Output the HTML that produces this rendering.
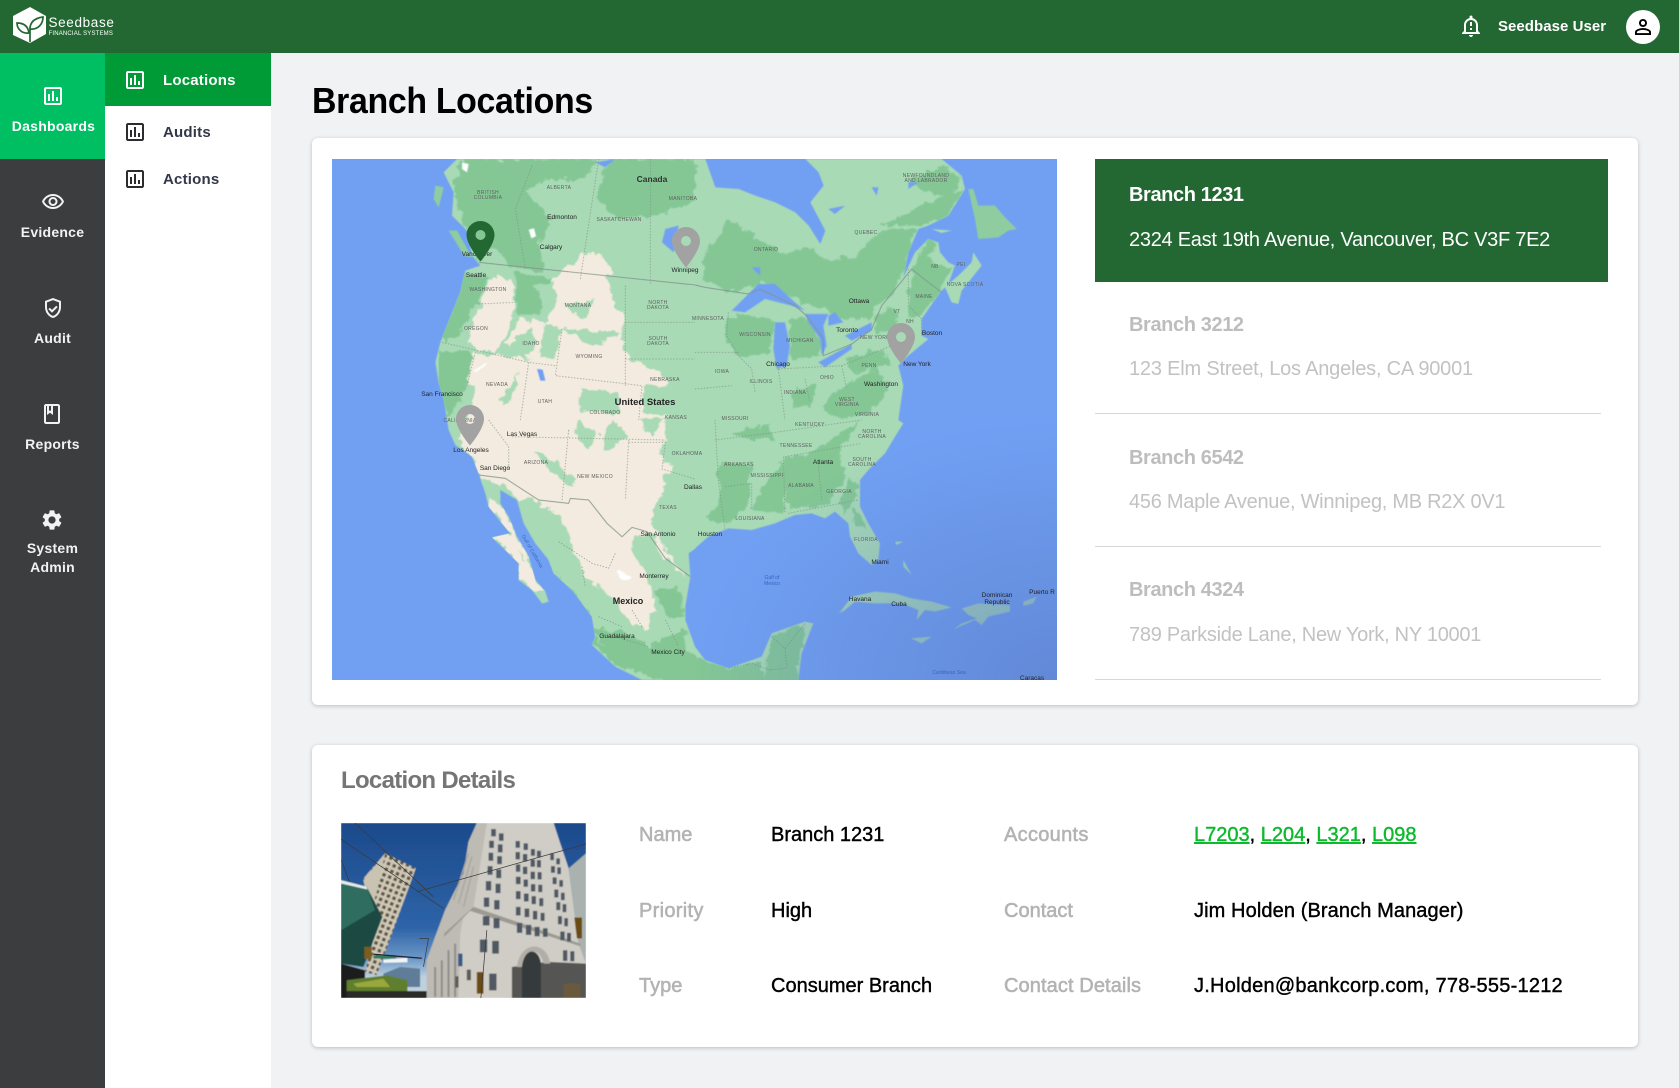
<!DOCTYPE html>
<html><head><meta charset="utf-8"><title>Branch Locations</title>
<style>
*{box-sizing:border-box}
html,body{margin:0;padding:0}
body{width:1679px;height:1088px;position:relative;overflow:hidden;background:#f1f2f4;font-family:"Liberation Sans",sans-serif}
.a{position:absolute;white-space:nowrap}
.bx{position:absolute}
.nav{position:absolute;left:0;width:105px;text-align:center;color:#f2f2f2;font-weight:700;font-size:14px;line-height:19px;letter-spacing:.25px}
.sub{position:absolute;left:163px;font-weight:700;font-size:15px;line-height:20px;letter-spacing:.2px;color:#33374a;white-space:nowrap}
svg.i{position:absolute;fill:currentColor}
.card{position:absolute;left:312px;width:1326px;background:#fff;border-radius:6px;box-shadow:0 1px 4px rgba(0,0,0,.22)}
.t{position:absolute;left:1129px;font-size:20px;line-height:24px;white-space:nowrap;letter-spacing:-.27px}
.h{font-weight:700;color:#bdbdbd;letter-spacing:-.39px}
.d{color:#c2c2c2}
.r{position:absolute;left:1095px;width:506px;height:1px;background:#d8d8d8}
.l,.v{position:absolute;font-size:20px;line-height:24px;white-space:nowrap;-webkit-text-stroke:.4px currentColor}
.l{color:#b3b3b3;-webkit-text-stroke:.55px currentColor}.v{color:#000}
.v u{color:#0cba2c}
#labels text{font-family:"Liberation Sans",sans-serif;text-anchor:middle;fill:#333}
#labels .s{font-size:5px;fill:#5f5f5f;letter-spacing:.3px}
#labels .c{font-size:6.5px;fill:#222;-webkit-text-stroke:.15px #222}
#labels .b{font-size:9.5px;font-weight:700;fill:#222}
#labels .w{font-size:5px;fill:#3467c0}
</style></head><body>

<div class="bx" style="left:0;top:0;width:1679px;height:53px;background:#236832"></div>
<svg class="bx" style="left:10px;top:4px" width="40" height="42" viewBox="10 4 40 42">
<path d="M30 7L46 16V34L30 43L13 35V16Z" fill="#fff"/>
<path d="M30 42V27M30 29C30 21 36 18 43 17C43 24 38 30 30 29ZM29 33C28 26 24 23 17 23C17 29 22 34 29 33Z" fill="none" stroke="#236832" stroke-width="1.7"/>
</svg>
<div class="a" style="left:48.500px;top:13px;font-size:13.500px;line-height:20px;color:#fff;letter-spacing:.65px">Seedbase</div>
<div class="a" style="left:48.500px;top:29.500px;font-size:6px;line-height:8px;color:#fff;letter-spacing:.18px">FINANCIAL SYSTEMS</div>
<svg class="i" style="left:1459px;top:14px;color:#fff" width="24" height="24" viewBox="0 0 24 24"><path d="M10.010 21.010c0 1.100.89 1.990 1.990 1.990s1.990-.89 1.990-1.990h-3.980zM12 6c2.760 0 5 2.240 5 5v7H7v-7c0-2.760 2.240-5 5-5zm0-4.500c-.83 0-1.500.67-1.500 1.500v1.170C7.360 4.850 5 7.650 5 11v6l-2 2v1h18v-1l-2-2v-6c0-3.350-2.360-6.150-5.500-6.830V3c0-.83-.67-1.500-1.500-1.500zM11 8h2v4h-2zm0 6h2v2h-2z"/></svg>
<div class="a" style="left:1498px;top:17px;font-weight:700;font-size:15px;line-height:20px;color:#fff;letter-spacing:.04px">Seedbase User</div>
<div class="bx" style="left:1626px;top:10px;width:34px;height:34px;border-radius:50%;background:#fff"></div>
<svg class="i" style="left:1631px;top:15px;color:#000" width="24" height="24" viewBox="0 0 24 24"><path d="M12 5.900c1.160 0 2.100.94 2.100 2.100s-.94 2.100-2.100 2.100S9.900 9.160 9.900 8s.94-2.100 2.100-2.100m0 9c2.970 0 6.100 1.460 6.100 2.100v1.100H5.900V17c0-.64 3.130-2.100 6.100-2.100M12 4C9.790 4 8 5.790 8 8s1.790 4 4 4 4-1.790 4-4-1.790-4-4-4zm0 9c-2.670 0-8 1.340-8 4v3h16v-3c0-2.660-5.330-4-8-4z"/></svg>

<div class="bx" style="left:0;top:53px;width:105px;height:1035px;background:#3c3d3f"></div>
<div class="bx" style="left:0;top:53px;width:105px;height:106px;background:#00bf63"></div>
<div class="bx" style="left:105px;top:53px;width:166px;height:1035px;background:#fff"></div>
<div class="bx" style="left:105px;top:53px;width:166px;height:53px;background:#009a36"></div>

<svg class="i" style="left:41px;top:84px;color:#fff" width="24" height="24" viewBox="0 0 24 24"><path d="M19 3H5c-1.100 0-2 .9-2 2v14c0 1.100.9 2 2 2h14c1.100 0 2-.9 2-2V5c0-1.100-.9-2-2-2zm0 16H5V5h14v14zM7 10h2v7H7zm4-3h2v10h-2zm4 6h2v4h-2z"/></svg>
<div class="nav" style="top:116.500px;color:#fff;left:1px">Dashboards</div>
<svg class="i" style="left:41px;top:190px;color:#f2f2f2" width="24" height="24" viewBox="0 0 24 24"><path d="M12 6c3.790 0 7.170 2.130 8.820 5.500C19.170 14.870 15.790 17 12 17s-7.170-2.130-8.820-5.500C4.830 8.130 8.210 6 12 6m0-2C7 4 2.730 7.110 1 11.500 2.730 15.890 7 19 12 19s9.270-3.110 11-7.500C21.270 7.110 17 4 12 4zm0 5c1.380 0 2.500 1.120 2.500 2.500S13.380 14 12 14s-2.500-1.120-2.500-2.500S10.620 9 12 9m0-2c-2.480 0-4.500 2.020-4.500 4.500S9.520 16 12 16s4.500-2.020 4.500-4.500S14.480 7 12 7z"/></svg>
<div class="nav" style="top:222.500px">Evidence</div>
<svg class="i" style="left:41px;top:296px;color:#f2f2f2" width="24" height="24" viewBox="0 0 24 24"><path d="M12 2L4 5v6.090c0 5.050 3.410 9.760 8 10.910 4.590-1.150 8-5.860 8-10.910V5l-8-3zm6 9.090c0 4-2.550 7.700-6 8.830-3.450-1.130-6-4.820-6-8.830v-4.700l6-2.250 6 2.250v4.700zm-9.180.64L7.400 13.150 11 16.760l5.660-5.660-1.410-1.410-4.240 4.240z"/></svg>
<div class="nav" style="top:328.500px">Audit</div>
<svg class="i" style="left:40px;top:402px;color:#f2f2f2" width="24" height="24" viewBox="0 0 24 24"><path d="M18 2H6c-1.100 0-2 .9-2 2v16c0 1.100.9 2 2 2h12c1.100 0 2-.9 2-2V4c0-1.100-.9-2-2-2zM9 4h2v5l-1-.75L9 9V4zm9 16H6V4h1v9l3-2.250L13 13V4h5v16z"/></svg>
<div class="nav" style="top:434.500px">Reports</div>
<svg class="i" style="left:40px;top:508px;color:#f2f2f2" width="24" height="24" viewBox="0 0 24 24"><path d="M19.140 12.940c.04-.3.06-.61.06-.94 0-.32-.02-.64-.07-.94l2.030-1.580c.18-.14.23-.41.12-.61l-1.920-3.320c-.12-.22-.37-.29-.59-.22l-2.390.96c-.5-.38-1.030-.7-1.620-.94l-.36-2.540c-.04-.24-.24-.41-.48-.41h-3.840c-.24 0-.43.17-.47.41l-.36 2.540c-.59.24-1.130.57-1.620.94l-2.390-.96c-.22-.08-.47 0-.59.22L2.740 8.870c-.12.21-.08.47.12.61l2.030 1.580c-.05.3-.09.63-.09.94s.02.64.07.94l-2.030 1.580c-.18.14-.23.41-.12.61l1.920 3.320c.12.22.37.29.59.22l2.390-.96c.5.38 1.030.7 1.620.94l.36 2.540c.05.24.24.41.48.41h3.840c.24 0 .44-.17.47-.41l.36-2.540c.59-.24 1.130-.56 1.620-.94l2.390.96c.22.08.47 0 .59-.22l1.920-3.320c.12-.22.07-.47-.12-.61l-2.010-1.580zM12 15.600c-1.980 0-3.600-1.620-3.600-3.600s1.620-3.600 3.600-3.600 3.600 1.620 3.600 3.600-1.620 3.600-3.600 3.600z"/></svg>
<div class="nav" style="top:538.500px">System<br>Admin</div>

<svg class="i" style="left:123px;top:68px;color:#fff" width="24" height="24" viewBox="0 0 24 24"><path d="M19 3H5c-1.100 0-2 .9-2 2v14c0 1.100.9 2 2 2h14c1.100 0 2-.9 2-2V5c0-1.100-.9-2-2-2zm0 16H5V5h14v14zM7 10h2v7H7zm4-3h2v10h-2zm4 6h2v4h-2z"/></svg>
<div class="sub" style="top:71px;color:#fff">Locations</div>
<svg class="i" style="left:123px;top:120px;color:#2c2c2e" width="24" height="24" viewBox="0 0 24 24"><path d="M19 3H5c-1.100 0-2 .9-2 2v14c0 1.100.9 2 2 2h14c1.100 0 2-.9 2-2V5c0-1.100-.9-2-2-2zm0 16H5V5h14v14zM7 10h2v7H7zm4-3h2v10h-2zm4 6h2v4h-2z"/></svg>
<div class="sub" style="top:122.500px">Audits</div>
<svg class="i" style="left:123px;top:167px;color:#2c2c2e" width="24" height="24" viewBox="0 0 24 24"><path d="M19 3H5c-1.100 0-2 .9-2 2v14c0 1.100.9 2 2 2h14c1.100 0 2-.9 2-2V5c0-1.100-.9-2-2-2zm0 16H5V5h14v14zM7 10h2v7H7zm4-3h2v10h-2zm4 6h2v4h-2z"/></svg>
<div class="sub" style="top:170px">Actions</div>

<div class="a" style="left:312px;top:79px;font-size:36px;line-height:44px;font-weight:700;color:#000;letter-spacing:-.35px;transform:scaleX(.941);transform-origin:0 0">Branch Locations</div>

<div class="card" style="top:138px;height:567px"></div>

<!-- map -->
<svg class="bx" style="left:332px;top:159px" width="725" height="521" viewBox="0 0 2175 1563" preserveAspectRatio="none">
<defs>
<radialGradient id="cg" cx="1" cy="1" r=".5"><stop offset="0" stop-color="#5a7cc8" stop-opacity=".65"/><stop offset="1" stop-color="#5a7cc8" stop-opacity="0"/></radialGradient>
<filter id="bl" x="-1%" y="-1%" width="102%" height="102%"><feGaussianBlur stdDeviation="1.500"/></filter>
<filter id="rough" x="0" y="0" width="100%" height="100%"><feTurbulence type="fractalNoise" baseFrequency=".035" numOctaves="3" seed="4" result="n"/><feDisplacementMap in="SourceGraphic" in2="n" scale="34" xChannelSelector="R" yChannelSelector="G"/><feGaussianBlur stdDeviation="1.500"/></filter>
<clipPath id="landclip"><path d="M375 0L335 40L365 100L360 170L405 215L420 290L445 320L400 335L385 400L365 450L345 500L325 550L310 610L320 670L335 720L345 783L350 813L370 858L420 893L440 943L460 1003L470 1043L510 1093L535 1123L480 1135L520 1173L560 1213L560 1263L600 1293L630 1333L650 1328L640 1298L610 1263L590 1193L555 1133L530 1073L505 1033L505 993L530 1008L555 1023L575 1093L610 1153L650 1203L665 1243L720 1293L780 1373L790 1433L780 1458L850 1523L930 1563L1399 1563L1409 1483L1444 1393L1419 1388L1319 1423L1289 1493L1189 1528L1119 1503L1089 1463L1060 1383L1060 1343L1075 1253L1070 1183L1089 1168L1129 1133L1189 1108L1259 1113L1329 1093L1389 1068L1439 1063L1479 1078L1509 1058L1549 1093L1554 1133L1579 1183L1619 1218L1639 1203L1644 1153L1609 1093L1584 1043L1584 963L1609 933L1659 883L1689 833L1714 793L1699 783L1714 680L1699 620L1729 590L1789 540L1769 530L1769 480L1824 400L1839 385L1859 430L1879 435L1889 395L1949 320L1924 280L1919 310L1879 350L1849 375L1869 320L1849 310L1824 280L1819 250L1789 240L1749 280L1714 355L1729 280L1759 210L1789 200L1849 170L1899 90L1889 50L1829 0L1420 0L1460 40L1475 80L1435 130L1480 215L1465 255L1430 200L1390 160L1330 130L1270 110L1220 90L1150 85L1120 0Z"/></clipPath>
</defs>
<rect width="2175" height="1563" fill="#71a0f3"/>
<g filter="url(#bl)">
<path fill="#a8dab6" d="M375 0L335 40L365 100L360 170L405 215L420 290L445 320L400 335L385 400L365 450L345 500L325 550L310 610L320 670L335 720L345 783L350 813L370 858L420 893L440 943L460 1003L470 1043L510 1093L535 1123L480 1135L520 1173L560 1213L560 1263L600 1293L630 1333L650 1328L640 1298L610 1263L590 1193L555 1133L530 1073L505 1033L505 993L530 1008L555 1023L575 1093L610 1153L650 1203L665 1243L720 1293L780 1373L790 1433L780 1458L850 1523L930 1563L1399 1563L1409 1483L1444 1393L1419 1388L1319 1423L1289 1493L1189 1528L1119 1503L1089 1463L1060 1383L1060 1343L1075 1253L1070 1183L1089 1168L1129 1133L1189 1108L1259 1113L1329 1093L1389 1068L1439 1063L1479 1078L1509 1058L1549 1093L1554 1133L1579 1183L1619 1218L1639 1203L1644 1153L1609 1093L1584 1043L1584 963L1609 933L1659 883L1689 833L1714 793L1699 783L1714 680L1699 620L1729 590L1789 540L1769 530L1769 480L1824 400L1839 385L1859 430L1879 435L1889 395L1949 320L1924 280L1919 310L1879 350L1849 375L1869 320L1849 310L1824 280L1819 250L1789 240L1749 280L1714 355L1729 280L1759 210L1789 200L1849 170L1899 90L1889 50L1829 0L1420 0L1460 40L1475 80L1435 130L1480 215L1465 255L1430 200L1390 160L1330 130L1270 110L1220 90L1150 85L1120 0Z"/>
<path fill="#8fcda0" d="M1909 90L1924 90L1939 140L1989 140L2019 175L2054 210L2029 215L1999 235L1939 240L1929 180ZM350 215L375 215L420 295L395 290L375 255ZM310 80L335 85L320 145L305 120Z"/>
<path fill="#a8dab6" d="M1799 210L1859 215L1829 222ZM1521 1363L1559 1313L1629 1298L1689 1303L1739 1318L1799 1328L1859 1345L1809 1358L1779 1353L1754 1383L1759 1353L1709 1333L1629 1333L1569 1328L1539 1353ZM1889 1348L1939 1333L2034 1338L2034 1358L1969 1373L1949 1398L1929 1383L1864 1411L1889 1393L1934 1378L1909 1368ZM1737 1438L1799 1433L1769 1453ZM2074 1328L2114 1313L2104 1333L2074 1341ZM1714 1203L1739 1248L1714 1223ZM1689 1148L1714 1148L1694 1158Z"/>
</g>
<g clip-path="url(#landclip)"><g filter="url(#rough)">
<g fill="#84c795">
<path d="M380 0L790 0L760 60L640 60L580 100L660 180L620 260L640 340L550 330L490 270L440 300L400 210L365 100Z"/>
<path d="M830 0L1089 0L1089 130L950 175L850 175L790 120Z"/>
<path d="M550 340L660 360L620 470L560 470Z"/>
<path d="M390 340L470 360L440 420L410 480L400 510L340 550L330 530L370 430Z"/>
<path d="M320 580L400 580L430 600L410 680L345 783L320 680Z"/>
</g>
<g fill="#f3ebdf">
<path d="M480 350L540 360L550 430L530 500L500 580L440 570L410 550L420 490L450 420Z"/>
<path d="M660 370L750 280L800 290L830 350L840 430L880 480L870 570L900 600L1000 650L1000 680L930 680L930 800L700 800L620 650L600 600L520 560L560 480L640 490L680 420Z"/>
<path d="M425 580L600 600L700 680L720 800L400 800L430 680L405 680Z"/>
<path d="M745 290L800 280L850 345L780 350Z"/>
</g>
<g fill="#a8dab6">
<path d="M560 640L520 700L500 740L550 700Z"/><path d="M640 490L690 510L660 600L620 590Z"/>
<path d="M750 690L860 700L870 800L770 800L740 730Z"/><path d="M690 510L870 520L780 560Z"/>
<path d="M690 440L790 420L760 480Z"/><path d="M600 380L670 370L640 440Z"/>
<path d="M530 560L600 500L610 580L550 600Z"/>
</g>
<g transform="translate(1089 0)">
<g fill="#84c795">
<path d="M20 310L100 180L180 230L260 285L330 270L400 300L490 290L560 210L660 210L640 300L600 400L540 440L520 480L440 480L390 450L300 420L200 370L100 400L30 360Z"/>
<path d="M660 320L700 240L735 250L690 300L770 330L740 390L680 470L650 480L640 400Z"/>
<path d="M560 200L620 170L700 130L790 90L810 90L760 170L680 200Z"/>
<path d="M640 60L750 20L800 60L760 110L680 100Z"/>
<path d="M540 470L600 450L600 510L540 530Z"/>
<path d="M100 470L220 470L240 500L220 590L130 590L100 540Z"/>
<path d="M280 480L340 480L380 540L370 590L290 600Z"/>
<path d="M420 700L550 620L580 700L520 760L440 783L380 740Z"/>
<path d="M450 600L560 570L580 620L480 640Z"/>
<path d="M300 690L360 680L350 740L290 750Z"/>
</g>
</g>
<g transform="translate(0 783)">
<g fill="#f3ebdf">
<path d="M470 -20L1000 -20L1000 130L1020 140L980 240L960 300L1000 390L1060 470L1000 530L950 580L960 630L880 600L840 540L760 470L700 420L690 290L630 260L620 240L555 240L520 190L470 190L440 160L425 115L375 60Z"/>
<path d="M510 310L535 340L480 352L520 390L560 430L560 480L600 510L640 515L610 480L590 410L555 350L530 290L505 250L470 230L470 260Z"/>
</g>
<g fill="#a8dab6">
<path d="M620 260L690 300L760 470L850 540L900 620L950 640L970 600L1010 640L1060 610L1060 800L850 740L780 650L760 560L660 450L650 410L630 370Z"/>
<path d="M900 350L960 340L1000 420L1060 470L1020 520L1060 600L970 600L960 510L940 460L900 400Z"/>
<path d="M1000 160L1089 130L1089 400L1000 330L950 300L1000 200Z"/>
<path d="M980 100L1040 0L1089 0L1089 130L1020 140Z"/>
<path d="M600 90L640 100L700 150L730 190L700 190L640 140Z"/><path d="M810 50L840 0L890 50L820 90Z"/>
<path d="M730 0L800 40L770 90L730 40Z"/><path d="M440 170L480 190L500 240L470 230Z"/>
<path d="M550 390L590 430L570 420Z"/><path d="M620 510L650 545L630 555Z"/>
<path d="M920 0L1000 -10L960 50Z"/>
</g>
<g fill="#84c795">
<path d="M660 440L760 560L790 650L860 740L780 680L720 520Z"/>
<path d="M780 620L880 640L950 680L1060 620L1060 800L850 740Z"/>
<path d="M970 510L1040 500L1060 590L1010 600Z"/>
</g>
<path fill="#fff" d="M865 455L878 450L900 480L888 490L860 465Z"/>
</g>
<g transform="translate(1089 783)">
<g fill="#84c795">
<path d="M270 110L350 100L420 50L500 0L430 100L450 170L400 250L280 270L265 200Z"/>
<path d="M170 270L220 170L265 120L270 200L260 280Z"/>
<path d="M70 130L170 130L160 250L100 310L40 300L70 220Z"/>
<path d="M110 40L220 10L240 60L160 60Z"/>
<path d="M470 170L490 200L450 280L430 250Z"/>
<path d="M470 260L500 290L510 330L470 300Z"/>
<path d="M230 650L330 610L320 680L300 800L200 800L220 710Z"/>
<path d="M-30 690L100 750L200 720L210 800L-30 800Z"/>
</g>
</g>
</g></g>
<g fill="#71a0f3" filter="url(#bl)">
<g transform="translate(1089 0)">
<path d="M110 455L190 375L240 375L300 430L330 455L290 440L210 420L150 460Z"/>
<path d="M240 490L270 490L285 560L275 620L245 630L235 570Z"/>
<path d="M330 465L400 465L385 500L395 560L380 590L375 540L340 490Z"/>
<path d="M400 470L420 460L445 490L400 500Z"/>
<path d="M370 610L470 555L470 570L390 625Z"/>
<path d="M450 530L530 490L530 515L470 545Z"/>
<path d="M170 325L195 325L195 350Z"/><path d="M400 150L450 140L420 165Z"/><path d="M530 85L550 85L545 110Z"/><path d="M640 70L670 70L640 90Z"/>
</g>
<path d="M1000 210L1040 200L1025 280L990 250Z"/>
<path d="M615 630L632 632L640 665L625 665Z"/>
<path d="M790 10L850 0L820 25Z"/>
</g>
<g fill="#fff" filter="url(#bl)"><path d="M390 10L410 15L405 40L390 30Z"/><path d="M590 212L606 208L612 232L598 238Z"/><path d="M425 635L465 610L460 620L430 640Z"/></g>
<g fill="none" stroke="#84948a" stroke-width="2.500">
<path d="M440 310L1089 378L1119 385L1249 405L1284 390L1389 440L1424 470L1474 540L1474 590L1559 555L1619 510L1649 440L1739 330L1789 370L1829 400"/>
<path d="M440 948L520 958L620 1023L710 1033L715 1018L770 1023L825 1093L870 1133L900 1105L945 1118L1000 1198L1075 1253"/>
</g>
<g fill="none" stroke="#7d8d83" stroke-width="2" stroke-dasharray="4 5">
<path d="M600 20L550 150L580 330M800 0L745 360M955 0L955 378"/>
<path d="M440 435L550 430M330 550L590 610L670 620M880 380L880 680M880 490L1089 490M880 600L1089 600M590 610L565 783M430 580L405 680M690 510L670 650L930 680L920 783"/>
<path d="M470 783L530 863L530 933M710 813L690 1023M890 843L880 1023M540 833L1000 843M890 850L1000 850L990 930L1089 960"/>
<g transform="translate(1089 0)"><path d="M100 460L95 530L130 590L170 630L180 700M0 580L130 580M250 630L440 620L590 560M250 630L270 783M330 660L345 730M440 620L455 690M0 690L110 680M640 330L640 440L680 480L680 530"/></g>
<g transform="translate(1089 783)"><path d="M60 0L70 180L90 330M60 60L220 40L500 0M90 200L170 190L170 270M265 110L270 280M270 110L500 70M280 280L490 240M370 130L380 240"/><path d="M230 650L270 685L330 610M100 745L170 730L220 750L270 745M270 685L275 745"/></g>
<g transform="translate(0 783)"><path d="M680 365L780 430L830 445L850 400M750 440L760 500M900 570L930 620M800 590L870 620M850 650L950 680M1000 600L1040 680"/></g>
</g>
<rect width="2175" height="1563" fill="url(#cg)"/>
</svg>
<svg id="labels" class="bx" style="left:332px;top:159px" width="725" height="521" viewBox="0 0 725 521">
<text x="320" y="23" style="font-size:8.500px;font-weight:700">Canada</text>
<text class="s" x="156" y="35">BRITISH</text><text class="s" x="156" y="40">COLUMBIA</text>
<text class="s" x="227" y="30">ALBERTA</text><text class="s" x="351" y="41">MANITOBA</text><text class="s" x="287" y="62">SASKATCHEWAN</text>
<text class="c" x="230" y="60">Edmonton</text><text class="c" x="219" y="90">Calgary</text>
<text class="s" x="434" y="92">ONTARIO</text><text class="s" x="534" y="75">QUEBEC</text>
<text class="s" x="594" y="18">NEWFOUNDLAND</text><text class="s" x="594" y="23">AND LABRADOR</text>
<text class="c" x="145" y="97">Vancouver</text><text class="c" x="144" y="118">Seattle</text><text class="s" x="156" y="132">WASHINGTON</text>
<text class="c" x="353" y="113">Winnipeg</text>
<text class="s" x="326" y="145">NORTH</text><text class="s" x="326" y="150">DAKOTA</text>
<text class="s" x="246" y="148">MONTANA</text><text class="s" x="376" y="161">MINNESOTA</text>
<text class="c" x="527" y="144">Ottawa</text><text class="s" x="633" y="127">NOVA SCOTIA</text>
<text class="s" x="603" y="109">NB</text><text class="s" x="629" y="107">PEI</text><text class="s" x="592" y="139">MAINE</text>
<text class="s" x="565" y="154">VT</text><text class="s" x="578" y="164">NH</text>
<text class="c" x="515" y="173">Toronto</text><text class="s" x="543" y="180">NEW YORK</text><text class="c" x="600" y="176">Boston</text>
<text class="s" x="144" y="171">OREGON</text><text class="s" x="199" y="186">IDAHO</text><text class="s" x="257" y="199">WYOMING</text>
<text class="s" x="326" y="181">SOUTH</text><text class="s" x="326" y="186">DAKOTA</text>
<text class="s" x="423" y="177">WISCONSIN</text><text class="s" x="468" y="183">MICHIGAN</text>
<text class="c" x="446" y="207">Chicago</text><text class="s" x="390" y="214">IOWA</text><text class="s" x="429" y="224">ILLINOIS</text>
<text class="s" x="463" y="235">INDIANA</text><text class="s" x="495" y="220">OHIO</text><text class="s" x="537" y="208">PENN</text>
<text class="c" x="585" y="207">New York</text><text class="c" x="549" y="227">Washington</text>
<text class="s" x="515" y="242">WEST</text><text class="s" x="515" y="247">VIRGINIA</text><text class="s" x="535" y="257">VIRGINIA</text>
<text class="s" x="165" y="227">NEVADA</text><text class="s" x="333" y="222">NEBRASKA</text>
<text class="b" x="313" y="246">United States</text>
<text class="s" x="213" y="244">UTAH</text><text class="s" x="273" y="255">COLORADO</text><text class="s" x="344" y="260">KANSAS</text>
<text class="s" x="403" y="261">MISSOURI</text><text class="s" x="478" y="267">KENTUCKY</text>
<text class="s" x="540" y="274">NORTH</text><text class="s" x="540" y="279">CAROLINA</text>
<text class="c" x="110" y="237">San Francisco</text><text class="s" x="128" y="263">CALIFORNIA</text>
<text class="c" x="190" y="277">Las Vegas</text><text class="c" x="139" y="293">Los Angeles</text><text class="c" x="163" y="311">San Diego</text>
<text class="s" x="204" y="305">ARIZONA</text><text class="s" x="263" y="319">NEW MEXICO</text><text class="s" x="355" y="296">OKLAHOMA</text>
<text class="s" x="407" y="307">ARKANSAS</text><text class="s" x="464" y="288">TENNESSEE</text><text class="s" x="435" y="318">MISSISSIPPI</text>
<text class="s" x="469" y="328">ALABAMA</text><text class="s" x="507" y="334">GEORGIA</text>
<text class="s" x="530" y="302">SOUTH</text><text class="s" x="530" y="307">CAROLINA</text>
<text class="c" x="491" y="305">Atlanta</text><text class="c" x="361" y="330">Dallas</text><text class="s" x="336" y="350">TEXAS</text>
<text class="s" x="418" y="361">LOUISIANA</text><text class="s" x="534" y="382">FLORIDA</text>
<text class="c" x="326" y="377">San Antonio</text><text class="c" x="378" y="377">Houston</text><text class="c" x="548" y="405">Miami</text>
<text class="c" x="322" y="419">Monterrey</text><text class="b" x="296" y="445" style="font-size:9px">Mexico</text>
<text class="c" x="285" y="479">Guadalajara</text><text class="c" x="336" y="495">Mexico City</text>
<text class="w" x="440" y="420">Gulf of</text><text class="w" x="440" y="426">Mexico</text>
<text class="c" x="528" y="442">Havana</text><text class="c" x="567" y="447">Cuba</text>
<text class="c" x="665" y="438">Dominican</text><text class="c" x="665" y="445">Republic</text><text class="c" x="710" y="435">Puerto R</text>
<text class="w" x="617" y="515">Caribbean Sea</text><text class="c" x="700" y="521">Caracas</text>
<text class="w" transform="translate(199 393) rotate(60)">Gulf of California</text>
<g fill-rule="evenodd">
<path fill="#236832" transform="translate(134.500 62)" d="M14 0C6.300 0 0 6.300 0 14c0 10 14 26.500 14 26.500S28 24 28 14C28 6.300 21.700 0 14 0ZM14 9a5 5 0 1 1 0 10a5 5 0 1 1 0-10Z"/>
<path fill="#a2a2a2" transform="translate(340 68)" d="M14 0C6.300 0 0 6.300 0 14c0 10 14 26.500 14 26.500S28 24 28 14C28 6.300 21.700 0 14 0ZM14 9a5 5 0 1 1 0 10a5 5 0 1 1 0-10Z"/>
<path fill="#a2a2a2" transform="translate(555 164)" d="M14 0C6.300 0 0 6.300 0 14c0 10 14 26.500 14 26.500S28 24 28 14C28 6.300 21.700 0 14 0ZM14 9a5 5 0 1 1 0 10a5 5 0 1 1 0-10Z"/>
<path fill="#a2a2a2" transform="translate(124 246)" d="M14 0C6.300 0 0 6.300 0 14c0 10 14 26.500 14 26.500S28 24 28 14C28 6.300 21.700 0 14 0ZM14 9a5 5 0 1 1 0 10a5 5 0 1 1 0-10Z"/>
</g>
</svg>

<!-- branch list -->
<div class="bx" style="left:1095px;top:159px;width:513px;height:123px;background:#236832"></div>
<div class="t" style="top:183px;font-weight:700;color:#fff;letter-spacing:-.39px">Branch 1231</div>
<div class="t" style="top:228px;color:#fff">2324 East 19th Avenue, Vancouver, BC V3F 7E2</div>
<div class="t h" style="top:313px">Branch 3212</div>
<div class="t d" style="top:357px;letter-spacing:-.2px">123 Elm Street, Los Angeles, CA 90001</div>
<div class="r" style="top:413px"></div>
<div class="t h" style="top:446px">Branch 6542</div>
<div class="t d" style="top:490px">456 Maple Avenue, Winnipeg, MB R2X 0V1</div>
<div class="r" style="top:546px"></div>
<div class="t h" style="top:578px">Branch 4324</div>
<div class="t d" style="top:623px">789 Parkside Lane, New York, NY 10001</div>
<div class="r" style="top:679px"></div>

<!-- details -->
<div class="card" style="top:745px;height:302px"></div>
<div class="a" style="left:341px;top:767px;font-size:24px;line-height:28px;font-weight:700;color:#757575;letter-spacing:-.7px">Location Details</div>

<svg class="bx" style="left:341px;top:823px" width="245" height="175" viewBox="63 69 734 524" preserveAspectRatio="none">
<defs>
<linearGradient id="sky" x1="0" y1="0" x2="0" y2="1"><stop offset="0" stop-color="#1c4a8c"/><stop offset=".6" stop-color="#2e64a8"/><stop offset=".78" stop-color="#6f9ac8"/><stop offset=".88" stop-color="#bcd0de"/><stop offset="1" stop-color="#c4d3de"/></linearGradient>
<pattern id="grid" width="18" height="18" patternUnits="userSpaceOnUse" patternTransform="rotate(22)"><rect width="18" height="18" fill="#cfc8b6"/><rect x="5" y="5" width="10" height="10" fill="#5a5142"/></pattern>
<filter id="b2"><feGaussianBlur stdDeviation="1.600"/></filter>
</defs>
<g filter="url(#b2)">
<rect x="63" y="69" width="734" height="524" fill="url(#sky)"/>
<path d="M190 520L240 500L300 505V560H190Z" fill="#5f7d98"/>
<path d="M190 478L262 472L262 486L190 488Z" fill="#f2f4f5"/>
<path d="M130 235L195 160L287 205L170 525L135 515L175 360Z" fill="url(#grid)"/>
<path d="M130 240L195 160L172 270L150 340Z" fill="#c9c3b3"/>
<path d="M63 240L140 260L187 350L130 500L63 490Z" fill="#1d4a42"/>
<path d="M63 240L140 260L165 330L63 390Z" fill="#2f6d60"/>
<path d="M63 240L140 260L142 268L63 250Z" fill="#e6ecea"/>
<path d="M63 490L135 510L135 593H63Z" fill="#1e1e1e"/>
<path d="M80 540L200 525L262 540L262 572H80Z" fill="#5f7f2d"/>
<path d="M100 550L190 535L210 560H110Z" fill="#9aa83a"/>
<path d="M80 572H330V593H80Z" fill="#2a2a26"/>
<path d="M745 205L797 160V490L775 430Z" fill="#a9b2af"/>
<path d="M470 69H700L720 130L745 205L775 430L797 490V593H320V480L345 410L375 330L430 220L445 125Z" fill="#cfcdc5"/>
<path d="M470 69L500 69L460 320L430 350L420 400L415 593H320V480L345 410L375 330L430 220L445 125Z" fill="#bdbbb3"/>
<path d="M372 400L460 320L780 430L780 438L450 332L372 410Z" fill="#9c9a92"/>
<path d="M345 590V500M365 590V480M385 590V450M405 590V430" stroke="#8f8d87" stroke-width="6" fill="none"/>
<path d="M400 300L445 160M415 310L455 170M430 320L460 200" stroke="#a8a69f" stroke-width="4" fill="none"/>
<path fill="#4f5963" d="M513 87h14v22h-14zM507 122h14v22h-14zM505 158h14v24h-14zM502 198h15v26h-15zM497 243h16v28h-16zM491 292h16v28h-16zM536 100h14v22h-14zM533 133h14v24h-14zM531 168h14v24h-14zM528 208h15v26h-15zM526 251h15v28h-15zM522 300h16v28h-16zM586 123h13v20h-13zM586 156h13v22h-13zM587 193h13v22h-13zM587 230h14v22h-14zM587 273h14v24h-14zM587 320h14v26h-14zM610 130h13v20h-13zM608 162h13v22h-13zM608 200h13v22h-13zM610 238h13v22h-13zM611 280h14v24h-14zM613 325h14v26h-14zM632 147h12v20h-12zM631 178h13v22h-13zM631 215h13v22h-13zM632 252h13v22h-13zM634 288h13v24h-13zM638 332h13v26h-13zM650 152h12v20h-12zM650 180h12v22h-12zM652 216h12v22h-12zM654 254h12v22h-12zM657 294h12v24h-12zM661 338h12v24h-12zM690 160h11v20h-11zM692 198h12v20h-12zM697 232h12v20h-12zM702 268h12v24h-12zM708 306h12v24h-12zM713 348h12v24h-12zM708 175h11v18h-11zM711 202h11v20h-11zM717 240h11v20h-11zM722 278h11v22h-11zM727 312h11v24h-11zM732 354h11v24h-11zM590 368h16v30h-16zM617 374h16v30h-16zM643 380h15v28h-15zM668 384h14v26h-14zM720 394h13v26h-13zM740 398h12v26h-12zM479 418h22v38h-22zM516 422h20v38h-20zM728 450h13v32h-13zM750 453h12v30h-12zM507 520h22v50h-22zM488 348h20v28h-20zM520 354h18v30h-18z"/>
<path d="M414 460h13v38h-13z" fill="#3a5a8a"/>
<path d="M440 508h12v32h-12zM405 528h10v34h-10z" fill="#5c5c58"/>
<path d="M575 500L680 485L797 490V593H575Z" fill="#555553"/>
<path d="M590 500C600 420 680 420 690 490L670 490C660 440 615 440 605 500Z" fill="#b0aea6"/>
<path d="M605 593V500C612 440 655 440 662 490V593Z" fill="#363b3c"/>
<path d="M730 550H780V593H730Z" fill="#6a5a3e"/>
<path d="M470 515H490V580H470ZM762 352H785V415H770Z" fill="#6a4c14"/>
<rect x="133" y="440" width="22" height="36" fill="#7d5d1a"/>
<rect x="160" y="465" width="68" height="10" fill="#2d7d55"/>
</g>
<g fill="none" stroke="#3a3a3a" stroke-width="2.200">
<path d="M105 69L340 290M63 118L370 325M290 275L797 132M310 500L325 415H298M500 390L482 593M64 180L88 245"/>
<path d="M160 462L305 474" stroke="#223" stroke-width="4"/>
</g>
</svg>

<div class="l" style="left:639px;top:823px">Name</div>
<div class="v" style="left:771px;top:823px">Branch 1231</div>
<div class="l" style="left:1004px;top:823px;letter-spacing:.3px">Accounts</div>
<div class="v" style="left:1194px;top:823px"><u>L7203</u>, <u>L204</u>, <u>L321</u>, <u>L098</u></div>
<div class="l" style="left:639px;top:899px;letter-spacing:.3px">Priority</div>
<div class="v" style="left:771px;top:899px">High</div>
<div class="l" style="left:1004px;top:899px">Contact</div>
<div class="v" style="left:1194px;top:899px;letter-spacing:.1px">Jim Holden (Branch Manager)</div>
<div class="l" style="left:639px;top:974px">Type</div>
<div class="v" style="left:771px;top:974px">Consumer Branch</div>
<div class="l" style="left:1004px;top:974px;letter-spacing:.1px">Contact Details</div>
<div class="v" style="left:1194px;top:974px;letter-spacing:.24px">J.Holden@bankcorp.com, 778-555-1212</div>
</body></html>
